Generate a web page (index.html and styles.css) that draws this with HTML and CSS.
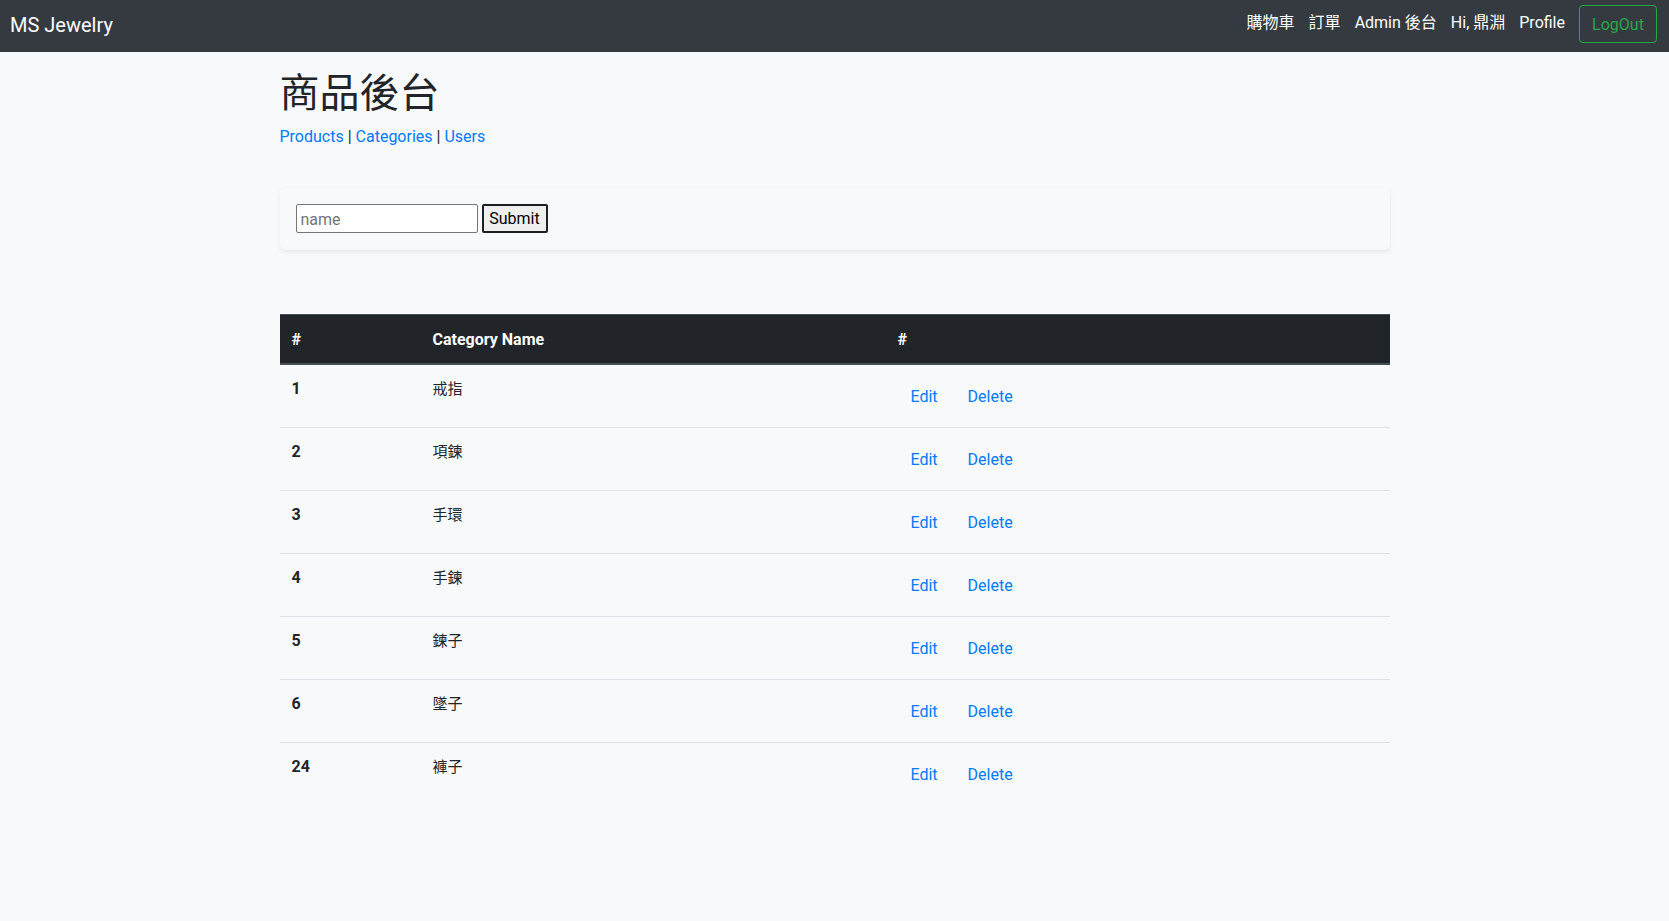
FILE: index.html
```html
<!DOCTYPE html>
<html lang="zh-Hant">
<head>
<meta charset="utf-8">
<title>MS Jewelry - 商品後台</title>
<link rel="stylesheet" href="styles.css">
</head>
<body>
<nav class="navbar">
  <a class="brand" href="#">MS Jewelry</a>
  <ul class="nav-links">
    <li><a href="#">購物車</a></li>
    <li><a href="#">訂單</a></li>
    <li><a href="#">Admin 後台</a></li>
    <li><a href="#">Hi, 鼎淵</a></li>
    <li><a href="#">Profile</a></li>
  </ul>
  <button class="btn-logout" type="button">LogOut</button>
</nav>
<main class="container">
  <h1 class="title">商品後台</h1>
  <p class="subnav"><a href="#">Products</a> | <a href="#">Categories</a> | <a href="#">Users</a></p>
  <div class="card">
    <form class="card-body">
      <input class="name-input" type="text" placeholder="name">
      <button class="submit-btn" type="submit">Submit</button>
    </form>
  </div>
  <table class="table">
    <thead>
      <tr>
        <th class="col-id">#</th>
        <th class="col-name">Category Name</th>
        <th class="col-act">#</th>
      </tr>
    </thead>
    <tbody>
      <tr><th>1</th><td>戒指</td><td><a class="btn-link" href="#">Edit</a> <a class="btn-link" href="#">Delete</a></td></tr>
      <tr><th>2</th><td>項鍊</td><td><a class="btn-link" href="#">Edit</a> <a class="btn-link" href="#">Delete</a></td></tr>
      <tr><th>3</th><td>手環</td><td><a class="btn-link" href="#">Edit</a> <a class="btn-link" href="#">Delete</a></td></tr>
      <tr><th>4</th><td>手鍊</td><td><a class="btn-link" href="#">Edit</a> <a class="btn-link" href="#">Delete</a></td></tr>
      <tr><th>5</th><td>鍊子</td><td><a class="btn-link" href="#">Edit</a> <a class="btn-link" href="#">Delete</a></td></tr>
      <tr><th>6</th><td>墜子</td><td><a class="btn-link" href="#">Edit</a> <a class="btn-link" href="#">Delete</a></td></tr>
      <tr><th>24</th><td>褲子</td><td><a class="btn-link" href="#">Edit</a> <a class="btn-link" href="#">Delete</a></td></tr>
    </tbody>
  </table>
</main>
</body>
</html>
```
FILE: styles.css
```css
* { box-sizing: border-box; }
html, body { margin: 0; padding: 0; }
body {
  font-family: Roboto, "Noto Sans CJK TC", sans-serif;
  font-size: 16px;
  line-height: 1.5;
  color: #212529;
  background: #f8f9fa;
  min-height: 921px;
}
a { color: #007bff; text-decoration: none; }

.navbar {
  display: flex;
  align-items: center;
  height: 52px;
  background: #343a40;
  padding: 0 12px 0 10px;
}
.brand {
  color: #fff;
  font-size: 20px;
  line-height: 30px;
  margin-top: -3px;
}
.nav-links {
  display: flex;
  list-style: none;
  margin: 0 0 0 auto;
  padding: 0;
}
.nav-links a {
  display: block;
  color: #fff;
  padding: 8px 7px;
  line-height: 24px;
  margin-top: -6px;
}
.btn-logout {
  margin-left: 7px;
  height: 38px;
  width: 78px;
  padding: 7px 0 5px;
  font: inherit;
  line-height: 24px;
  color: #28a745;
  background: transparent;
  border: 1px solid #28a745;
  border-radius: 4px;
  margin-top: -4px;
}

.container {
  width: 1140px;
  margin: 0 auto;
  padding: 16px 15px 0;
}
.title {
  margin: 0 0 6px;
  padding-top: 2px;
  font-size: 40px;
  font-weight: 400;
  line-height: 48px;
}
.subnav {
  margin: 0 0 39px;
  padding-top: 1px;
  line-height: 24px;
}

.card {
  background: #f8f9fa;
  border-radius: 5px;
  box-shadow: 0 2px 4px rgba(0, 0, 0, 0.075);
}
.card-body {
  display: flex;
  align-items: center;
  gap: 4px;
  padding: 16px 16px 17px;
  margin: 0;
}
.name-input {
  width: 182px;
  height: 29px;
  font: inherit;
  font-size: 16px;
  padding: 1px 4px 0;
  border: 1px solid #767676;
  border-radius: 2px;
  background: #fff;
  color: #212529;
}
.name-input::placeholder { color: #757575; }
.submit-btn {
  height: 29px;
  width: 66px;
  padding: 1px 0 0;
  font: inherit;
  font-size: 16px;
  line-height: 24px;
  color: #000;
  background: #efefef;
  border: 2px solid #1f1f1f;
  border-radius: 2px;
}

.table {
  width: 100%;
  margin-top: 64px;
  border-collapse: collapse;
}
.table th, .table td {
  padding: 12px;
  text-align: left;
  vertical-align: top;
  line-height: 24px;
  border-top: 1px solid #dee2e6;
}
.table thead th {
  background: #212529;
  color: #fff;
  font-weight: 700;
  vertical-align: bottom;
  padding: 13px 12px 11px;
  border-top: 1px solid #454d55;
  border-bottom: 2px solid #454d55;
}
.table tbody th { font-weight: 700; }
.table tbody td:nth-child(2) { font-size: 15px; }
.col-id { width: 141px; }
.col-name { width: 465px; }
.table tbody tr:first-child th,
.table tbody tr:first-child td { border-top: 0; }
.btn-link {
  display: inline-block;
  padding: 7px 12px 5px;
  border: 1px solid transparent;
  line-height: 24px;
  color: #007bff;
}
```
